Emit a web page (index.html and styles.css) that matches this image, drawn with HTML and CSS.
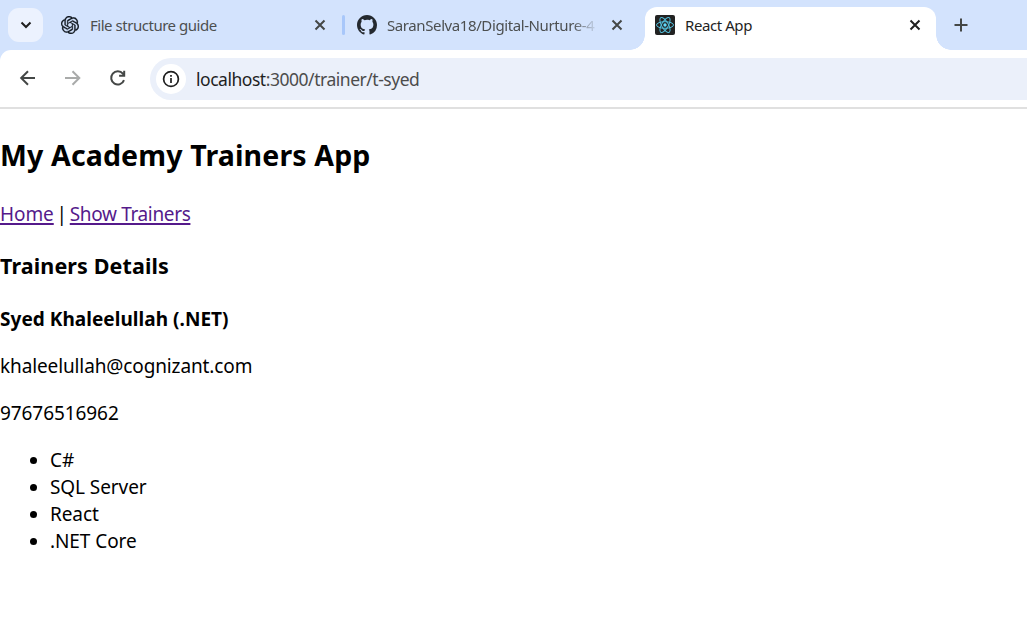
FILE: index.html
```html
<!DOCTYPE html>
<html lang="en">
<head>
<meta charset="utf-8">
<title>React App</title>
<link rel="stylesheet" href="styles.css">
</head>
<body>
<header class="tabstrip">
  <button class="tab-search" aria-label="Search tabs">
    <svg width="12" height="8" viewBox="0 0 12 8"><path d="M1.5 1.5 6 6l4.500-4.500" fill="none" stroke="#1f1f1f" stroke-width="2"/></svg>
  </button>
  <div class="tab tab-guide">
    <svg class="icon-guide" width="18" height="18" viewBox="0 0 24 24"><path fill="#111820" stroke="#111820" stroke-width=".35" d="M22.2819 9.8211a5.9847 5.9847 0 0 0-.5157-4.9108 6.0462 6.0462 0 0 0-6.5098-2.9A6.0651 6.0651 0 0 0 4.9807 4.1818a5.9847 5.9847 0 0 0-3.9977 2.9 6.0462 6.0462 0 0 0 .7427 7.0966 5.98 5.98 0 0 0 .511 4.9107 6.051 6.051 0 0 0 6.5146 2.9001A5.9847 5.9847 0 0 0 13.2599 24a6.0557 6.0557 0 0 0 5.7718-4.2058 5.9894 5.9894 0 0 0 3.9977-2.9001 6.0557 6.0557 0 0 0-.7475-7.0729zm-9.022 12.6081a4.4755 4.4755 0 0 1-2.8764-1.0408l.1419-.0804 4.7783-2.7582a.7948.7948 0 0 0 .3927-.6813v-6.7369l2.02 1.1686a.071.071 0 0 1 .038.052v5.5826a4.504 4.504 0 0 1-4.4945 4.4944zm-9.6607-4.1254a4.4708 4.4708 0 0 1-.5346-3.0137l.142.0852 4.783 2.7582a.7712.7712 0 0 0 .7806 0l5.8428-3.3685v2.3324a.0804.0804 0 0 1-.0332.0615L9.74 19.9502a4.4992 4.4992 0 0 1-6.1408-1.6464zM2.3408 7.8956a4.485 4.485 0 0 1 2.3655-1.9728V11.6a.7664.7664 0 0 0 .3879.6765l5.8144 3.3543-2.0201 1.1685a.0757.0757 0 0 1-.071 0l-4.8303-2.7865A4.504 4.504 0 0 1 2.3408 7.872zm16.5963 3.8558L13.1038 8.364 15.1192 7.2a.0757.0757 0 0 1 .071 0l4.8303 2.7913a4.4944 4.4944 0 0 1-.6765 8.1042v-5.6772a.79.79 0 0 0-.407-.667zm2.0107-3.0231l-.142-.0852-4.7735-2.7818a.7759.7759 0 0 0-.7854 0L9.409 9.2297V6.8974a.0662.0662 0 0 1 .0284-.0615l4.8303-2.7866a4.4992 4.4992 0 0 1 6.6802 4.66zM8.3065 12.863l-2.02-1.1638a.0804.0804 0 0 1-.038-.0567V6.0742a4.4992 4.4992 0 0 1 7.3757-3.4537l-.142.0805L8.704 5.459a.7948.7948 0 0 0-.3927.6813zm1.0976-2.3654l2.602-1.4998 2.6069 1.4998v2.9994l-2.5974 1.4997-2.6067-1.4997Z"/></svg>
    <span class="tab-title title-guide">File structure guide</span>
    <svg class="close" width="12" height="12" viewBox="0 0 12 12"><path d="m1.500 1.500 9 9m0-9-9 9"/></svg>
  </div>
  <div class="separator"></div>
  <div class="tab tab-repo">
    <svg width="20" height="20" viewBox="0 0 16 16"><path fill="#24292f" d="M8 0C3.580 0 0 3.580 0 8c0 3.540 2.290 6.530 5.470 7.590.4.070.550-.170.550-.380 0-.190-.010-.820-.010-1.490-2.010.370-2.530-.490-2.690-.940-.090-.230-.480-.940-.820-1.130-.280-.150-.680-.520-.010-.530.630-.010 1.080.580 1.230.820.720 1.210 1.870.870 2.330.660.070-.520.280-.870.510-1.070-1.780-.2-3.640-.890-3.640-3.950 0-.870.310-1.590.820-2.150-.080-.2-.360-1.020.080-2.120 0 0 .670-.210 2.200.820A7.600 7.600 0 0 1 8 3.860c.680 0 1.360.090 2 .270 1.530-1.040 2.200-.820 2.200-.820.440 1.100.160 1.920.080 2.120.510.560.820 1.270.820 2.150 0 3.070-1.870 3.750-3.650 3.950.290.250.540.730.540 1.480 0 1.070-.010 1.930-.010 2.200 0 .210.150.460.550.380A8.010 8.010 0 0 0 16 8c0-4.420-3.580-8-8-8Z"/></svg>
    <span class="tab-title title-repo">SaranSelva18/Digital-Nurture-4</span>
    <svg class="close" width="12" height="12" viewBox="0 0 12 12"><path d="m1.500 1.500 9 9m0-9-9 9"/></svg>
  </div>
  <div class="tab tab-active">
    <svg width="20" height="20" viewBox="0 0 20 20"><rect width="20" height="20" rx="2" fill="#222"/><g fill="none" stroke="#53c1de" stroke-width="1"><ellipse cx="10" cy="10" rx="8.500" ry="3.300"/><ellipse cx="10" cy="10" rx="8.500" ry="3.300" transform="rotate(60 10 10)"/><ellipse cx="10" cy="10" rx="8.500" ry="3.300" transform="rotate(120 10 10)"/></g><circle cx="10" cy="10" r="1.700" fill="#61dafb"/></svg>
    <span class="tab-title title-app">React App</span>
    <svg class="close" width="12" height="12" viewBox="0 0 12 12"><path d="m1.500 1.500 9 9m0-9-9 9"/></svg>
  </div>
  <svg class="new-tab" width="14" height="14" viewBox="0 0 14 14"><path d="M7 .5v13M.5 7h13" stroke="#444746" stroke-width="2"/></svg>
</header>
<div class="toolbar-back">
<nav class="toolbar">
  <svg width="20" height="20" viewBox="0 0 20 20" fill="none" stroke="#444746" stroke-width="2"><path d="M17 10H4M10 3.200 3.200 10l6.800 6.800"/></svg>
  <svg width="20" height="20" viewBox="0 0 20 20" fill="none" stroke="#a9abaa" stroke-width="2"><path d="M2 10H15.500M9.500 3.200l6.800 6.800-6.800 6.800"/></svg>
  <svg width="20" height="20" viewBox="0 0 20 20" fill="none" stroke="#444746" stroke-width="2"><path d="M16 12.100A6.600 6.600 0 1 1 14.900 5.700L16.200 7.300M16.200 2.700v5.100H11.100"/></svg>
  <div class="omnibox">
    <span class="site-info"><svg width="18" height="18" viewBox="0 0 18 18"><circle cx="9" cy="9" r="7.400" fill="none" stroke="#1f1f1f" stroke-width="1.700"/><path d="M9 8v5M9 5v1.800" stroke="#1f1f1f" stroke-width="1.700"/></svg></span>
    <span class="url"><span class="host">localhost</span>:3000/trainer/t-syed</span>
  </div>
</nav>
</div>
<main class="page">
  <h2>My Academy Trainers App</h2>
  <div class="links"><a class="home" href="#">Home</a><span class="bar">|</span><a class="show" href="#">Show Trainers</a></div>
  <h3>Trainers Details</h3>
  <h4>Syed Khaleelullah (.NET)</h4>
  <p class="email">khaleelullah@cognizant.com</p>
  <p class="phone">97676516962</p>
  <ul>
    <li>C#</li>
    <li>SQL Server</li>
    <li>React</li>
    <li>.NET Core</li>
  </ul>
</main>
</body>
</html>
```
FILE: styles.css
```css
* { box-sizing: border-box; }
body { margin: 0; height: 624px; overflow: hidden; background: #fff; color: #000; font: 19px/27px "Noto Sans", "Open Sans", sans-serif; letter-spacing: -.08px; }
svg { display: block; flex: none; }
.tabstrip { display: flex; height: 50px; background: #d3e3fd; }
.tab-search { width: 35px; height: 34px; margin: 8px 0 0 8px; padding: 0 0 1px 1px; border: 0; border-radius: 11px; background: #ecf2fe; display: flex; align-items: center; justify-content: center; }
.tab { display: flex; align-items: center; height: 50px; font-size: 15px; line-height: 22px; color: #4c4f50; }
.tab-guide { width: 282px; margin-left: 17px; padding-left: 1px; }
.tab-guide .close { margin-right: 16px; }
.icon-guide { margin-right: 11px; }
.tab-title { flex: 1; min-width: 0; white-space: nowrap; }
.title-guide { letter-spacing: -.47px; }
.close { fill: none; stroke: #444746; stroke-width: 2; }
.separator { width: 3px; height: 20px; margin-top: 15px; border-radius: 2px; background: #a8c7fa; }
.tab-repo { width: 300px; padding-left: 12px; }
.title-repo { flex: 0 0 209px; margin: 0 15px 0 10px; letter-spacing: -.4px; -webkit-mask-image: linear-gradient(to right, #000 185px, transparent 211px); mask-image: linear-gradient(to right, #000 185px, transparent 211px); }
.tab-active { position: relative; width: 291px; height: 43px; margin-top: 7px; padding: 0 15px 7px 10px; border-radius: 12px 12px 0 0; background: #fff; color: #1f1f1f; }
.tab-active::before, .tab-active::after { content: ""; position: absolute; bottom: 0; width: 15px; height: 15px; }
.tab-active::before { left: -15px; background: radial-gradient(circle at 0 0, transparent 14.5px, #fff 15px); }
.tab-active::after { right: -15px; background: radial-gradient(circle at 100% 0, transparent 14.5px, #fff 15px); }
.title-app { margin-left: 10px; letter-spacing: -.42px; }
.tab-active .close { stroke: #1f1f1f; }
.new-tab { margin: 18px 0 0 18px; }
.toolbar-back { background: #d3e3fd; }
.toolbar { display: flex; align-items: center; gap: 25px; height: 59px; padding: 0 0 1px 18px; border-bottom: 2px solid #e0e0e0; border-radius: 11px 0 0 0; background: #fff; }
.omnibox { flex: 1; display: flex; align-items: center; height: 42px; margin: 2px 0 0 -3px; padding-left: 6px; border-radius: 21px 0 0 21px; background: #ebf0fa; }
.site-info { width: 30px; height: 30px; border-radius: 50%; background: #fff; display: flex; align-items: center; justify-content: center; }
.url { margin-left: 10px; font-size: 17.5px; letter-spacing: -.47px; color: #4c4c4c; }
.host { color: #1f1f1f; }
.page { padding-top: 26px; }
.page h2 { margin: 0 0 26px; font-size: 28.5px; line-height: 40px; letter-spacing: .15px; }
.links { display: flex; }
.bar { width: 16px; text-align: center; }
.show { letter-spacing: -.35px; }
.page a { color: #551a8b; text-decoration-thickness: 2px; text-underline-offset: 2px; text-decoration-skip-ink: none; }
.page h3 { margin: 22px 0 24px; font-size: 21.5px; line-height: 32px; letter-spacing: .12px; }
.page h4 { margin: 0 0 20px; font-size: 19px; line-height: 27px; letter-spacing: .04px; }
.page p { margin: 0 0 20px; }
.email { letter-spacing: -.12px; }
.page ul { margin: 0; padding-left: 50px; }
```
